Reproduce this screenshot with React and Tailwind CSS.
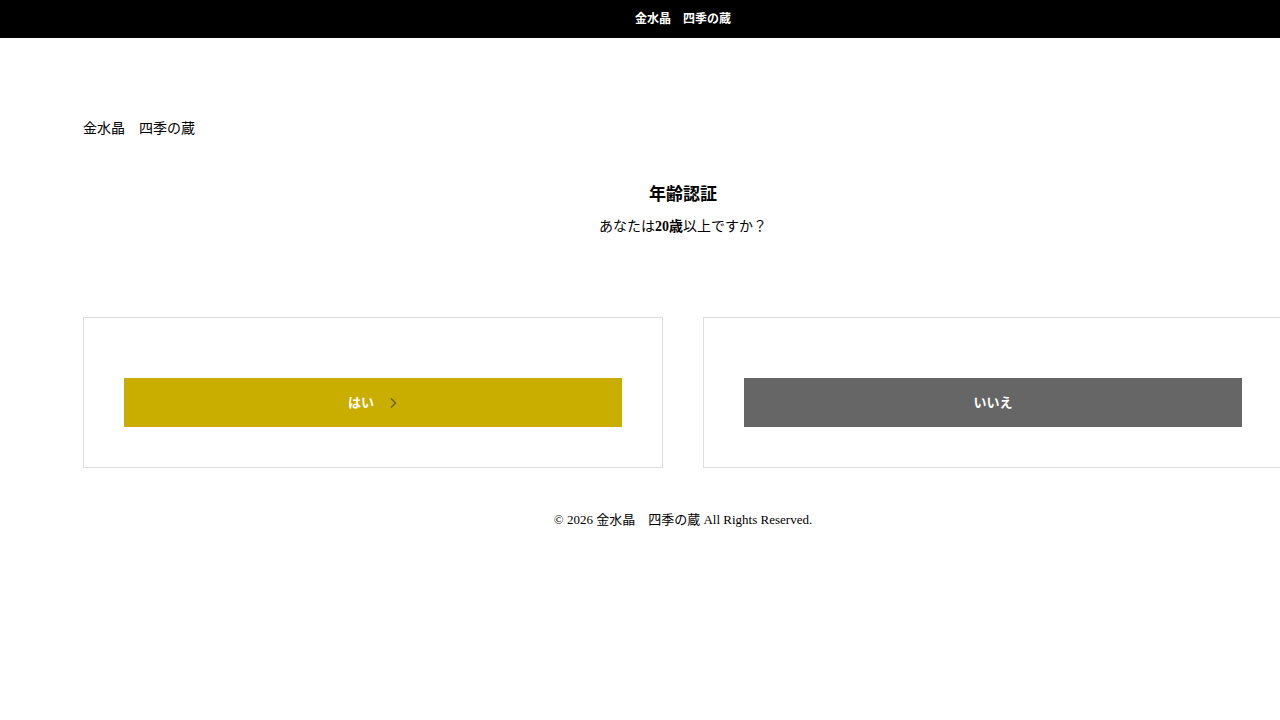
import React from 'react';

const font = { fontFamily: '"Liberation Serif", "Noto Sans CJK JP", serif' };

const ChoiceBox = ({ label, color, arrow }) => (
  <div className="w-[580px] h-[151px] border border-[#dddddd] pt-[60px] px-[40px]">
    <button className={`w-[498px] h-[49px] ${color} text-white text-[13px] font-bold flex items-center justify-center`}>
      <span>{label}</span>
      {arrow && (
        <svg className="ml-[14px] w-[10px] h-[12px]" viewBox="0 0 10 12" fill="none">
          <path d="M3 1.5 L7.5 6 L3 10.5" stroke="#6b5e10" strokeWidth="1.4" />
        </svg>
      )}
    </button>
  </div>
);

export default function App() {
  return (
    <div className="w-[1280px] h-[720px] overflow-hidden bg-white text-black" style={font}>
      <header className="h-[38px] bg-black">
        <div className="w-[1200px] ml-[83px] h-full flex items-center justify-center">
          <span className="text-white text-[12px] font-bold">金水晶　四季の蔵</span>
        </div>
      </header>

      <main className="w-[1200px] ml-[83px]">
        <div className="pt-[81px] text-[14px] leading-[20px]">金水晶　四季の蔵</div>

        <div className="mt-[44px] text-center">
          <h1 className="text-[17px] font-bold leading-[24px]">年齢認証</h1>
          <p className="mt-[10px] text-[14px] leading-[20px]">
            あなたは<span className="font-bold">20歳</span>以上ですか？
          </p>
        </div>

        <div className="mt-[80px] flex gap-[40px]">
          <ChoiceBox label="はい" color="bg-[#c9ae00]" arrow />
          <ChoiceBox label="いいえ" color="bg-[#666666]" />
        </div>

        <footer className="mt-[43px] text-center text-[13px] leading-[18px]">
          © 2026 金水晶　四季の蔵 All Rights Reserved.
        </footer>
      </main>
    </div>
  );
}
